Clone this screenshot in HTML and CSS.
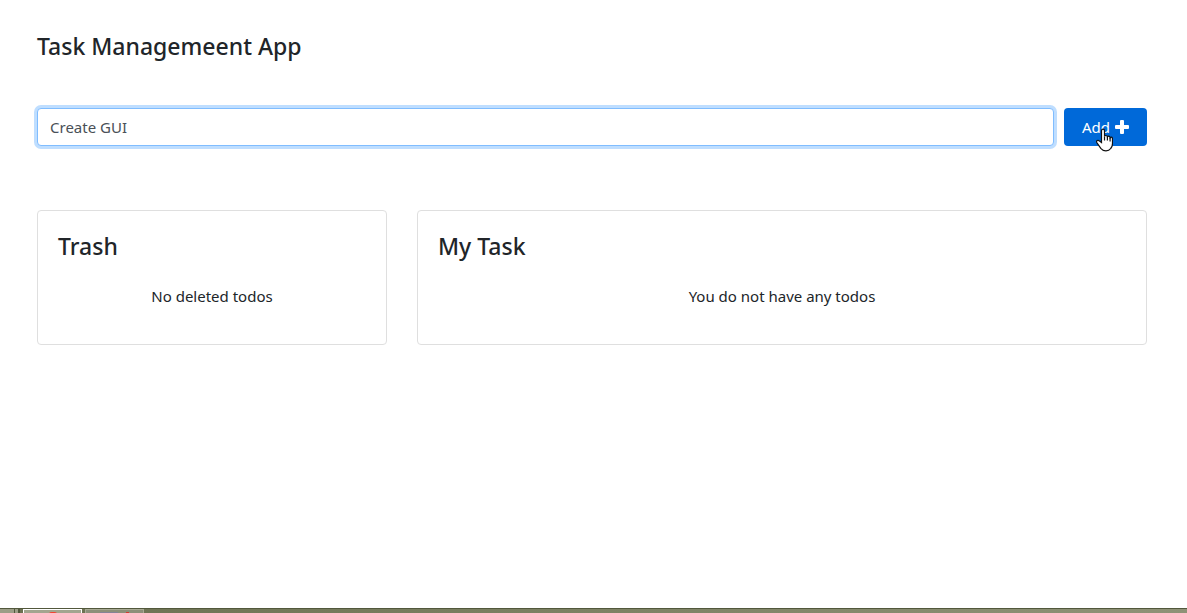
FILE: index.html
```
<!DOCTYPE html>
<html lang="en">
<head>
    <meta charset="UTF-8">
    <meta name="viewport" content="width=device-width, initial-scale=1.0">
    <title>Task Management App</title>
    <link rel="stylesheet" href="styles.css">
</head>
<body>
    <main class="container">
        <h1 class="title">Task Managemeent App</h1>

        <form class="task-form">
            <input type="text" class="task-input" aria-label="Task" value="Create GUI">
            <button type="button" class="add-btn">
                Add
                <svg class="plus" viewBox="0 0 14 14" aria-hidden="true">
                    <path d="M6 0h2q1 0 1 1v4h4q1 0 1 1v2q0 1-1 1H9v4q0 1-1 1H6q-1 0-1-1V9H1q-1 0-1-1V6q0-1 1-1h4V1q0-1 1-1z"/>
                </svg>
                <svg class="pointer" viewBox="0 0 17 23" aria-hidden="true">
                    <path d="M5.5 14V2.5q0-1.8 1.5-1.8t1.5 1.8V8q.2-1 1.4-1t1.5 1.5q.3-.8 1.3-.8t1.4 1.6q.3-.6 1.1-.6 1.3 0 1.3 1.8V15q0 3-1.8 5-1.6 2.3-4.7 2.3-3.3 0-5.2-2.5L1 14.3q-.9-1.5.2-2.2 1.1-.7 2.3.4z"/>
                    <path d="M8.5 8v4M11.4 8.5V12M14.1 9.5V13"/>
                </svg>
            </button>
        </form>

        <div class="boards">
            <section class="card">
                <h2 class="card-title">Trash</h2>
                <p class="card-text">No deleted todos</p>
            </section>
            <section class="card">
                <h2 class="card-title">My Task</h2>
                <p class="card-text">You do not have any todos</p>
            </section>
        </div>
    </main>

    <footer class="taskbar">
        <span class="tray"></span>
        <span class="task-item active"><span class="mark"></span></span>
        <span class="task-item"><span class="lines"></span><span class="dot"></span></span>
    </footer>
</body>
</html>
```
FILE: styles.css
```
* {
    box-sizing: border-box;
}

body {
    margin: 0;
    min-height: 100vh;
    display: flex;
    flex-direction: column;
    font-family: "Segoe UI", "Noto Sans", sans-serif;
    font-size: 15px;
    line-height: 24px;
    color: #212529;
    background-color: #fff;
}

.container {
    flex: 1;
    padding: 32px 40px 32px 37px;
}

.title,
.card-title {
    margin: 0;
    font-size: 23px;
    font-weight: 500;
    line-height: 29px;
}

.task-form {
    display: flex;
    gap: 10px;
    margin: 47px 0 64px;
}

.task-input {
    flex: 1;
    min-width: 0;
    height: 38px;
    padding: 6px 12px;
    border: 1px solid #80bdff;
    border-radius: 4px;
    outline: none;
    box-shadow: 0 0 0 3px #bfdeff;
    font: inherit;
    color: #495057;
    background-color: #fff;
}

.add-btn {
    position: relative;
    display: flex;
    align-items: center;
    justify-content: center;
    gap: 5px;
    width: 83px;
    height: 38px;
    padding: 0;
    border: none;
    border-radius: 4px;
    font: inherit;
    color: #fff;
    background-color: #0069d9;
    cursor: pointer;
}

.plus {
    width: 14px;
    height: 14px;
    fill: #fff;
}

/* hand pointer over the button */
.pointer {
    position: absolute;
    top: 20px;
    left: 32px;
    width: 17px;
    height: 24px;
    fill: #fff;
    stroke: #111;
    stroke-width: 1.2;
}

.boards {
    display: grid;
    grid-template-columns: 35fr 73fr;
    gap: 30px;
}

.card {
    min-width: 0;
    padding: 21px 20px 36px;
    border: 1px solid #dfdfdf;
    border-radius: 4px;
}

.card-text {
    margin: 23px 0 0;
    text-align: center;
}

.taskbar {
    display: flex;
    gap: 3px;
    height: 5px;
    border-top: 1px solid #52583c;
    background-color: #85896c;
    background-image: linear-gradient(90deg, #6b7050, #8f9277);
    overflow: hidden;
}

.tray {
    width: 20px;
    border-right: 2px solid #52583c;
    background: linear-gradient(90deg, #9c9e87 14px, #52583c 14px, #52583c 15px, #9c9e87 15px);
}

.task-item {
    display: flex;
    justify-content: center;
    gap: 8px;
    width: 59px;
    padding-top: 2px;
    border: 1px solid #a8aa94;
    border-bottom: none;
    background-color: #8d8f79;
}

.task-item.active {
    border-color: #fff;
    background-color: #a3a58f;
}

.mark {
    width: 10px;
    height: 4px;
    border-radius: 5px 5px 0 0;
    background-color: #f4432f;
}

.lines {
    width: 18px;
    background-color: #858397;
}

.dot {
    width: 3px;
    background-color: #d03c30;
}
```
